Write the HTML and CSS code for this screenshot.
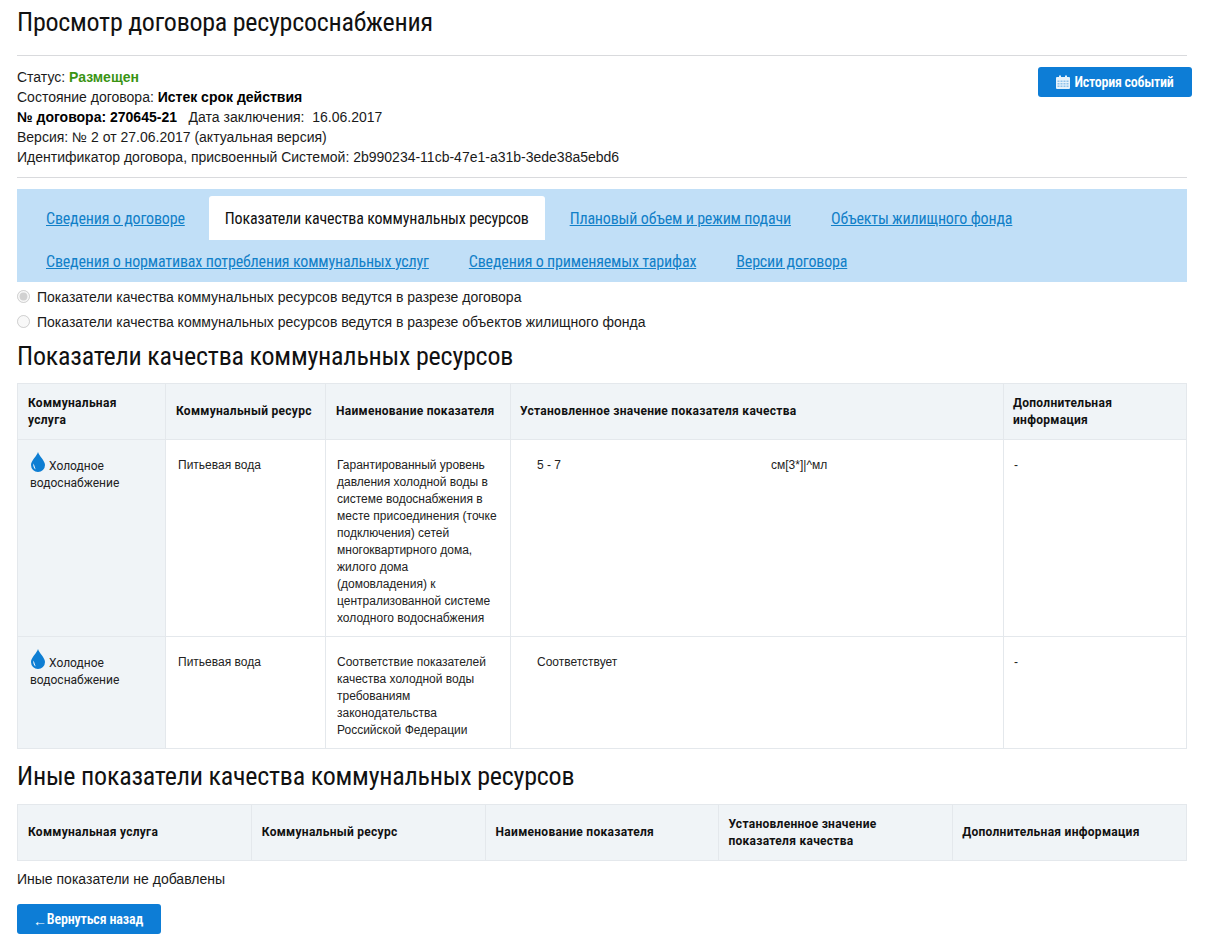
FILE: index.html
```html
<!DOCTYPE html>
<html lang="ru">
<head>
<meta charset="utf-8">
<title>Просмотр договора ресурсоснабжения</title>
<link rel="stylesheet" href="styles.css">
</head>
<body>
<main class="page">
  <h1 class="title">Просмотр договора ресурсоснабжения</h1>
  <hr class="rule rule-top">
  <section class="summary">
    <div class="meta">
      <div>Статус: <b class="ok">Размещен</b></div>
      <div>Состояние договора: <b>Истек срок действия</b></div>
      <div><b>№ договора: 270645-21</b> &nbsp; Дата заключения: &nbsp;16.06.2017</div>
      <div>Версия: № 2 от 27.06.2017 (актуальная версия)</div>
      <div>Идентификатор договора, присвоенный Системой: 2b990234-11cb-47e1-a31b-3ede38a5ebd6</div>
    </div>
    <a class="btn btn-history" href="#">
      <svg class="cal" viewBox="0 0 14 14" width="14" height="14"><path fill="#e6f2fb" d="M1 2h2V0.5h2V2h4V0.5h2V2h2a1 1 0 0 1 1 1v10a1 1 0 0 1-1 1H1a1 1 0 0 1-1-1V3a1 1 0 0 1 1-1z"/><path fill="#8fc2ea" d="M1.5 5.5h2v1.5h-2zM4.5 5.5h2v1.5h-2zM7.5 5.5h2v1.5h-2zM10.5 5.5h2v1.5h-2zM1.5 8h2v1.500h-2zM4.5 8h2v1.500h-2zM7.5 8h2v1.500h-2zM10.5 8h2v1.500h-2zM1.5 10.5h2V12h-2zM4.5 10.5h2V12h-2zM7.5 10.5h2V12h-2zM10.5 10.5h2V12h-2z"/></svg>
      История событий
    </a>
  </section>
  <hr class="rule rule-bottom">
  <nav class="tabs">
    <a class="tab" href="#">Сведения о договоре</a>
    <span class="tab tab-active">Показатели качества коммунальных ресурсов</span>
    <a class="tab" href="#">Плановый объем и режим подачи</a>
    <a class="tab" href="#">Объекты жилищного фонда</a>
    <a class="tab" href="#">Сведения о нормативах потребления коммунальных услуг</a>
    <a class="tab" href="#">Сведения о применяемых тарифах</a>
    <a class="tab" href="#">Версии договора</a>
  </nav>
  <div class="radios">
    <label class="radio"><input type="radio" name="m" checked disabled> Показатели качества коммунальных ресурсов ведутся в разрезе договора</label>
    <label class="radio"><input type="radio" name="m" disabled> Показатели качества коммунальных ресурсов ведутся в разрезе объектов жилищного фонда</label>
  </div>
  <h2 class="subtitle">Показатели качества коммунальных ресурсов</h2>
  <table class="grid grid-main">
    <colgroup><col class="c1"><col class="c2"><col class="c3"><col class="c4"><col class="c5"></colgroup>
    <thead>
      <tr><th>Коммунальная услуга</th><th>Коммунальный ресурс</th><th>Наименование показателя</th><th>Установленное значение показателя качества</th><th>Дополнительная информация</th></tr>
    </thead>
    <tbody>
      <tr class="row-a">
        <td class="service"><svg class="drop" viewBox="0 0 16 20" width="16" height="20"><path fill="#0e7ed3" d="M8 0C9 4 15 8.500 15 13a7 7 0 0 1-14 0C1 8.500 7 4 8 0z"/><path fill="#fff" d="M3.600 11.500c-.8 2.500.2 5 2.200 6-.9-1.800-1.200-3.600-2.200-6z"/></svg> Холодное водоснабжение</td>
        <td class="res">Питьевая вода</td>
        <td class="name">Гарантированный уровень давления холодной воды в системе водоснабжения в месте присоединения (точке подключения) сетей многоквартирного дома, жилого дома (домовладения) к централизованной системе холодного водоснабжения</td>
        <td class="val"><div class="val-row"><span class="val-num">5 - 7</span><span>см[3*]|^мл</span></div></td>
        <td class="extra">-</td>
      </tr>
      <tr class="row-b">
        <td class="service"><svg class="drop" viewBox="0 0 16 20" width="16" height="20"><path fill="#0e7ed3" d="M8 0C9 4 15 8.500 15 13a7 7 0 0 1-14 0C1 8.500 7 4 8 0z"/><path fill="#fff" d="M3.600 11.500c-.8 2.500.2 5 2.200 6-.9-1.800-1.200-3.600-2.200-6z"/></svg> Холодное водоснабжение</td>
        <td class="res">Питьевая вода</td>
        <td class="name">Соответствие показателей качества холодной воды требованиям законодательства Российской Федерации</td>
        <td class="val"><div class="val-row"><span class="val-num">Соответствует</span></div></td>
        <td class="extra">-</td>
      </tr>
    </tbody>
  </table>
  <h2 class="subtitle subtitle-other">Иные показатели качества коммунальных ресурсов</h2>
  <table class="grid grid-other">
    <thead>
      <tr><th>Коммунальная услуга</th><th>Коммунальный ресурс</th><th>Наименование показателя</th><th>Установленное значение показателя качества</th><th>Дополнительная информация</th></tr>
    </thead>
  </table>
  <p class="empty">Иные показатели не добавлены</p>
  <a class="btn btn-back" href="#"><span class="arrow">←</span>Вернуться назад</a>
</main>
</body>
</html>
```
FILE: styles.css
```css
* { box-sizing: border-box; }
html, body { margin: 0; padding: 0; background: #fff; }
body { font-family: "Liberation Sans", Arial, sans-serif; font-size: 14px; color: #1a1a1a; }
.page { padding: 0 18px 13px 17px; width: 1205px; }
.title, .subtitle, .tab, .btn { font-family: Roboto, "Liberation Sans", sans-serif; font-stretch: 75%; }
.title { margin: 0; padding-top: 7px; font-size: 26px; line-height: 30px; font-weight: 400; color: #111; letter-spacing: -.25px; }
.rule { border: 0; height: 1px; background: #d9dadd; margin: 0; }
.rule-top { margin-top: 18px; }
.rule-bottom { margin-top: 10px; }
.summary { display: flex; justify-content: space-between; align-items: flex-start; margin-top: 11px; margin-right: -5px; }
.meta { line-height: 20px; font-size: 14px; }
.meta b { color: #000; }
.meta .ok { color: #3a9413; }
.btn { display: inline-flex; align-items: center; justify-content: center; background: #0d7dd6; color: #fff; text-decoration: none; border-radius: 3px; font-size: 14px; font-weight: 600; height: 30px; letter-spacing: -.25px; }
.btn-history { width: 154px; }
.cal { margin-right: 4px; }
.tabs { margin-top: 11px; background: #c1dff7; height: 93px; padding: 7px 0 0 9px; display: flex; flex-wrap: wrap; align-content: flex-start; }
.tab { font-size: 16px; line-height: 45px; height: 44px; padding: 0 20px; color: #1180c8; text-decoration: underline; letter-spacing: -.17px; white-space: nowrap; }
.tab:nth-child(n+5) { margin-top: -1px; }
.tab-active { background: #fff; color: #111; text-decoration: none; border-radius: 3px 3px 0 0; padding: 0 16px; margin-right: 5px; }
.tab:first-child { margin-right: 4px; }
.radios { margin-top: 2px; }
.radio { display: flex; align-items: center; height: 25px; font-size: 14px; color: #1a1a1a; }
.radio input { margin: 0 7px 0 0; width: 13px; height: 13px; }
.subtitle { margin: 0; margin-top: 7px; font-size: 26px; line-height: 30px; font-weight: 400; color: #111; letter-spacing: -.22px; }
.subtitle-other { margin-top: 12px; }
.grid { width: 1169px; table-layout: fixed; border-collapse: collapse; font-family: Roboto, "Liberation Sans", sans-serif; font-size: 12px; line-height: 17px; color: #222; }
.grid-main { margin-top: 12px; }
.grid-other { margin-top: 13px; width: 1170px; }
.grid th, .grid td { border: 1px solid #e4e8ec; vertical-align: top; }
.grid th { background: #f0f4f7; font-weight: 700; text-align: left; vertical-align: middle; color: #111; padding: 0 10px; height: 56px; letter-spacing: .28px; }
.grid th:nth-child(n+4) { padding-left: 9px; }
.grid td { padding: 17px 10px 0 11px; font-family: "Liberation Sans", Arial, sans-serif; }
.c1 { width: 148px; } .c2 { width: 160px; } .c3 { width: 185px; } .c4 { width: 493px; } .c5 { width: 183px; }
.row-a { height: 197px; } .row-b { height: 112px; }
.grid td.service { background: #f0f4f7; padding-top: 12px; padding-right: 4px; padding-left: 12px; font-family: Roboto, "Liberation Sans", sans-serif; }
.drop { vertical-align: -2px; }
.grid td.res { padding-left: 12px; }
.val-row { display: flex; padding-left: 15px; }
.val-num { width: 234px; }
.grid td.extra { padding-left: 10px; }
.empty { margin: 10px 0 0; font-size: 14px; line-height: 17px; }
.btn-back { width: 144px; margin-top: 16px; letter-spacing: -.15px; padding-right: 2px; }
.arrow { font-weight: 400; font-size: 14px; margin: 4px 0 0 0; }
```
